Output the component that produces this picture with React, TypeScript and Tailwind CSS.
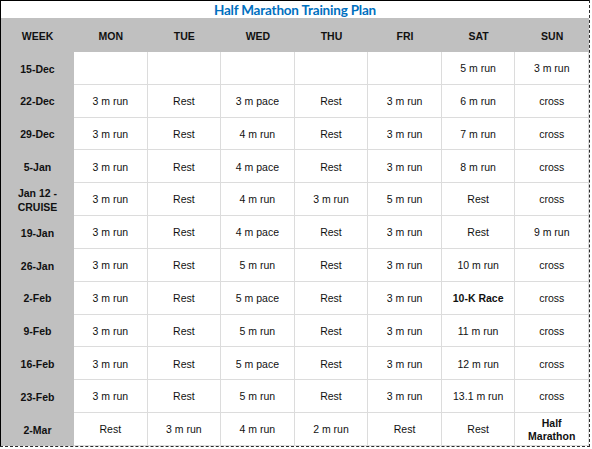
import React from "react";

const days = ["MON", "TUE", "WED", "THU", "FRI", "SAT", "SUN"];

type Cell = string | { text: string[]; bold?: boolean };

const rows: { week: string[]; cells: Cell[] }[] = [
  { week: ["15-Dec"], cells: ["", "", "", "", "", "5 m run", "3 m run"] },
  { week: ["22-Dec"], cells: ["3 m run", "Rest", "3 m pace", "Rest", "3 m run", "6 m run", "cross"] },
  { week: ["29-Dec"], cells: ["3 m run", "Rest", "4 m run", "Rest", "3 m run", "7 m run", "cross"] },
  { week: ["5-Jan"], cells: ["3 m run", "Rest", "4 m pace", "Rest", "3 m run", "8 m run", "cross"] },
  { week: ["Jan 12 -", "CRUISE"], cells: ["3 m run", "Rest", "4 m run", "3 m run", "5 m run", "Rest", "cross"] },
  { week: ["19-Jan"], cells: ["3 m run", "Rest", "4 m pace", "Rest", "3 m run", "Rest", "9 m run"] },
  { week: ["26-Jan"], cells: ["3 m run", "Rest", "5 m run", "Rest", "3 m run", "10 m run", "cross"] },
  { week: ["2-Feb"], cells: ["3 m run", "Rest", "5 m pace", "Rest", "3 m run", { text: ["10-K Race"], bold: true }, "cross"] },
  { week: ["9-Feb"], cells: ["3 m run", "Rest", "5 m run", "Rest", "3 m run", "11 m run", "cross"] },
  { week: ["16-Feb"], cells: ["3 m run", "Rest", "5 m pace", "Rest", "3 m run", "12 m run", "cross"] },
  { week: ["23-Feb"], cells: ["3 m run", "Rest", "5 m run", "Rest", "3 m run", "13.1 m run", "cross"] },
  { week: ["2-Mar"], cells: ["Rest", "3 m run", "4 m run", "2 m run", "Rest", "Rest", { text: ["Half", "Marathon"], bold: true }] },
];

export default function App() {
  return (
    <div className="w-[592px] h-[449px] bg-white" style={{ fontFamily: '"Liberation Sans", Arial, sans-serif' }}>
      <div className="w-[590px] h-[447px] border-r border-b border-dashed border-[#2a2a2a]">
        <div className="w-full h-full border-l border-t border-black grid grid-cols-[73px_repeat(7,minmax(0,1fr))] grid-rows-[17px_34px_repeat(12,minmax(0,1fr))]">
          <div
            className="col-span-8 flex items-end justify-center pb-[1px] text-[#0070c0] font-bold text-[13.5px] leading-none tracking-[-0.2px]"
            style={{ fontFamily: 'Lato, "Open Sans", sans-serif' }}
          >
            Half Marathon Training Plan
          </div>
          <div className="bg-[#c0c0c0] flex items-center justify-center pt-[3px] font-bold text-[10.5px] text-[#111]">WEEK</div>
          {days.map((d) => (
            <div key={d} className="bg-[#c0c0c0] flex items-center justify-center pt-[3px] font-bold text-[10.5px] text-[#111]">
              {d}
            </div>
          ))}
          {rows.map((r, i) => (
            <React.Fragment key={i}>
              <div className="bg-[#c0c0c0] flex flex-col items-center justify-center pt-[2px] font-bold text-[10.5px] leading-[13.5px] text-[#111]">
                {r.week.map((w) => (
                  <span key={w}>{w}</span>
                ))}
              </div>
              {r.cells.map((c, j) => {
                const isObj = typeof c !== "string";
                const lines = isObj ? c.text : [c];
                return (
                  <div
                    key={j}
                    className={
                      "bg-white border-r border-b border-[#dcdcdc] flex flex-col items-center justify-center pt-[2px] text-[10.5px] leading-[13.5px] text-[#111] " +
                      (isObj && c.bold ? "font-bold" : "")
                    }
                  >
                    {lines.map((l, k) => (
                      <span key={k}>{l}</span>
                    ))}
                  </div>
                );
              })}
            </React.Fragment>
          ))}
        </div>
      </div>
    </div>
  );
}
